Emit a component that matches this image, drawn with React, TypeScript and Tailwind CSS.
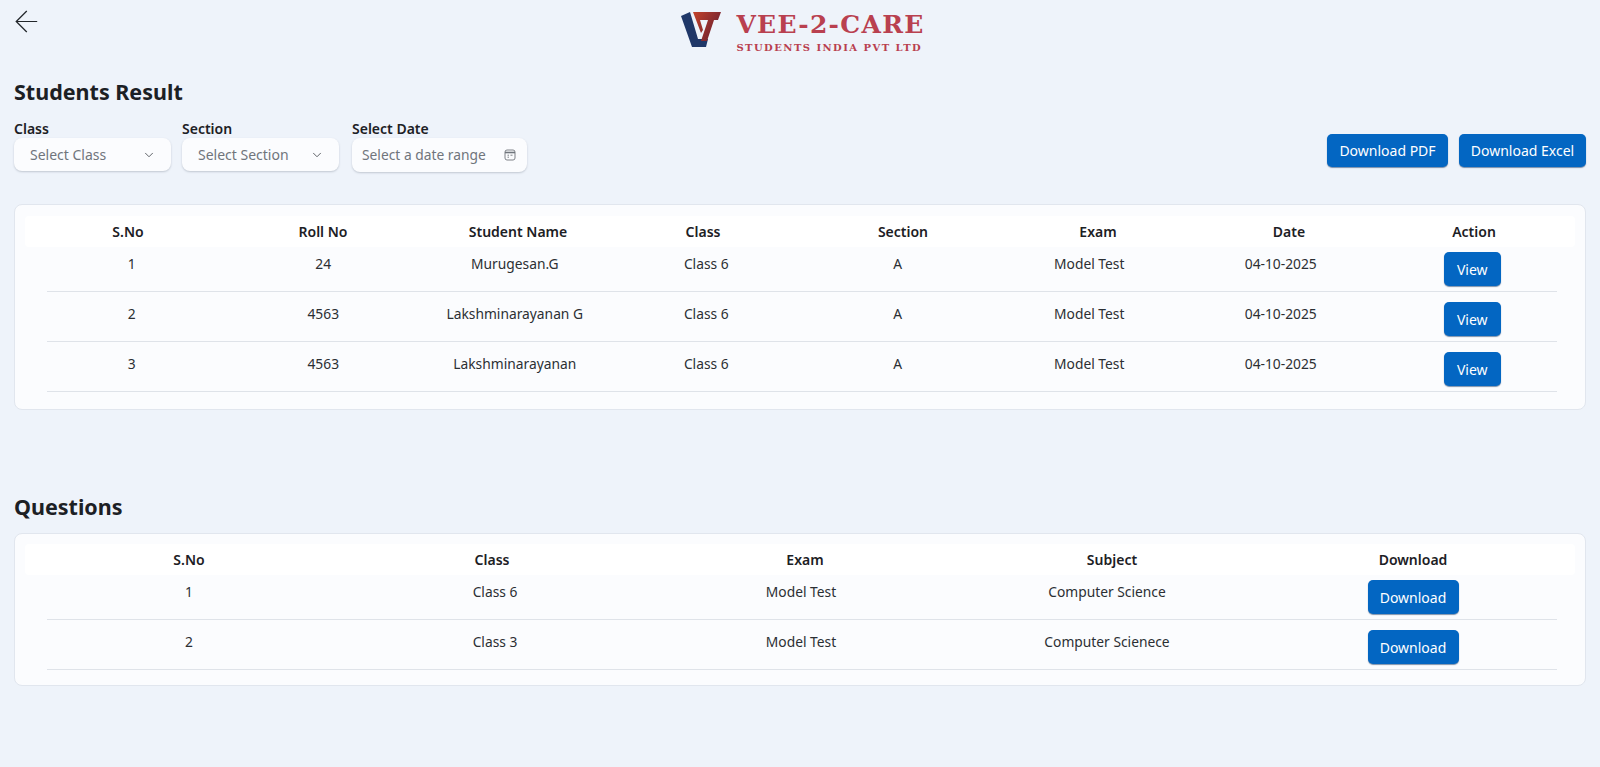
import { ArrowLeft, ChevronDown } from "lucide-react";

const students = [
  { sno: 1, roll: "24", name: "Murugesan.G", cls: "Class 6", section: "A", exam: "Model Test", date: "04-10-2025" },
  { sno: 2, roll: "4563", name: "Lakshminarayanan G", cls: "Class 6", section: "A", exam: "Model Test", date: "04-10-2025" },
  { sno: 3, roll: "4563", name: "Lakshminarayanan", cls: "Class 6", section: "A", exam: "Model Test", date: "04-10-2025" },
];

const questions = [
  { sno: 1, cls: "Class 6", exam: "Model Test", subject: "Computer Science" },
  { sno: 2, cls: "Class 3", exam: "Model Test", subject: "Computer Scienece" },
];

function Logo() {
  return (
    <div className="ml-[5px] flex items-start gap-[14px]">
      <svg width="42" height="38" viewBox="0 0 42 38" className="mt-[1px]">
        <defs>
          <linearGradient id="seven" x1="0" y1="0" x2="1" y2="0.6">
            <stop offset="0" stopColor="#c4432b" />
            <stop offset="1" stopColor="#6d2030" />
          </linearGradient>
        </defs>
        <path d="M1 5 L10 1 L18 28 L28 28 L26 36 L12 36 Z" fill="#1f3768" />
        <path d="M13 1 L41 1 L38 9 L34 9 L27 30 L21 30 L28 9 L20 9 L23 19 L21 22 Z" fill="url(#seven)" />
      </svg>
      <div className="flex flex-col items-start font-['DejaVu_Serif',serif] font-bold text-[#b9404f]">
        <div className="text-[25px] leading-[30px] tracking-[1.3px]">VEE-2-CARE</div>
        <div className="mt-[1px] text-[10px] leading-[13px] tracking-[1.45px]">STUDENTS INDIA PVT LTD</div>
      </div>
    </div>
  );
}

function Picker({ label, placeholder, width }: { label: string; placeholder: string; width: string }) {
  return (
    <div>
      <div className="text-[14px] leading-[19px] font-semibold text-[#1c2024]">{label}</div>
      <div className={`${width} flex h-[33px] items-center justify-between rounded-lg bg-[#fbfcfe] pl-4 pr-[15px] text-[14px] text-[#70757c] shadow-[0_1px_2px_rgba(60,70,90,0.25)]`}>
        <span>{placeholder}</span>
        <ChevronDown size={14} strokeWidth={1.5} className="text-[#4a4f55]" />
      </div>
    </div>
  );
}

function BlueButton({ children, className }: { children: string; className: string }) {
  return (
    <button className={`${className} rounded-[5px] bg-[#0366c2] text-[14px] text-white shadow-[0_1px_1px_rgba(0,40,90,0.5)]`}>
      {children}
    </button>
  );
}

export default function App() {
  return (
    <div className="min-h-[767px] bg-[#eef3fa] font-['Noto_Sans',sans-serif] text-[#2b2f33]">
      <div className="relative flex h-[67px] items-start justify-center pt-[10px]">
        <ArrowLeft className="absolute left-[9px] top-[4px] text-[#22262a]" size={35} strokeWidth={0.85} />
        <Logo />
      </div>

      <div className="pl-[14px] pr-[14px]">
        <h1 className="mt-[10px] text-[21.5px] leading-[30px] font-bold text-[#1c2024]">Students Result</h1>

        <div className="mt-[12px] flex items-start justify-between">
          <div className="flex gap-[11px]">
            <Picker label="Class" placeholder="Select Class" width="w-[157px]" />
            <Picker label="Section" placeholder="Select Section" width="w-[157px]" />
            <div className="ml-[2px]">
              <div className="text-[14px] leading-[19px] font-semibold text-[#1c2024]">Select Date</div>
              <div className="flex h-[34px] w-[175px] items-center justify-between rounded-lg bg-[#fbfcfe] pl-[10px] pr-[11px] text-[13.8px] text-[#70757c] shadow-[0_1px_2px_rgba(60,70,90,0.25)]">
                <span>Select a date range</span>
                <svg width="12" height="12" viewBox="0 0 12 12" fill="none" stroke="currentColor" strokeWidth="0.9">
                  <rect x="1" y="1" width="10" height="10" rx="2" />
                  <path d="M1 3.5H11" strokeWidth="1.6" />
                  <path d="M3.5 6.2H5M6.5 6.2H8.5M3.5 8.2H5" />
                </svg>
              </div>
            </div>
          </div>
          <div className="mt-[15px] flex gap-[11px]">
            <BlueButton className="h-[33px] w-[121px]">Download PDF</BlueButton>
            <BlueButton className="h-[33px] w-[127px]">Download Excel</BlueButton>
          </div>
        </div>

        <div className="mt-[32px] rounded-lg border border-[#e1e6ee] bg-[#fbfcfe] pl-[32px] pr-[28px] pt-[11px] pb-[17px]">
          <div className="-ml-[22px] -mr-[18px] grid h-[31px] grid-cols-[162px_228px_162px_208px_192px_198px_184px_186px] items-center rounded bg-white pl-[22px] text-center text-[14px] font-semibold text-[#1c2024]">
            <div>S.No</div>
            <div>Roll No</div>
            <div>Student Name</div>
            <div>Class</div>
            <div>Section</div>
            <div>Exam</div>
            <div>Date</div>
            <div>Action</div>
          </div>
          {students.map((s, i) => (
            <div key={s.sno} className={`${i === 0 ? "h-[45px]" : "h-[50px]"} border-b border-[#dfe3e9]`}>
              <div className="-ml-[11px] -mr-[11px] grid h-full grid-cols-8 items-end text-center text-[13.8px]">
                <div className="pb-[16px]">{s.sno}</div>
                <div className="pb-[16px]">{s.roll}</div>
                <div className="pb-[16px]">{s.name}</div>
                <div className="pb-[16px]">{s.cls}</div>
                <div className="pb-[16px]">{s.section}</div>
                <div className="pb-[16px]">{s.exam}</div>
                <div className="pb-[16px]">{s.date}</div>
                <div className="flex justify-center pb-[5px]">
                  <BlueButton className="h-[34px] w-[57px]">View</BlueButton>
                </div>
              </div>
            </div>
          ))}
        </div>

        <h2 className="mt-[82px] text-[21.5px] leading-[30px] font-bold text-[#1c2024]">Questions</h2>

        <div className="mt-[11px] rounded-lg border border-[#e1e6ee] bg-[#fbfcfe] pl-[32px] pr-[28px] pt-[10px] pb-[15px]">
          <div className="-ml-[22px] -mr-[18px] grid h-[31px] grid-cols-[284px_322px_304px_310px_292px] items-center rounded bg-white pl-[22px] text-center text-[14px] font-semibold text-[#1c2024]">
            <div>S.No</div>
            <div>Class</div>
            <div>Exam</div>
            <div>Subject</div>
            <div>Download</div>
          </div>
          {questions.map((q, i) => (
            <div key={q.sno} className={`${i === 0 ? "h-[45px]" : "h-[50px]"} border-b border-[#dfe3e9]`}>
              <div className="-ml-[11px] -mr-[9px] grid h-full grid-cols-5 items-end text-center text-[13.8px]">
                <div className="pb-[16px]">{q.sno}</div>
                <div className="pb-[16px]">{q.cls}</div>
                <div className="pb-[16px]">{q.exam}</div>
                <div className="pb-[16px]">{q.subject}</div>
                <div className="flex justify-center pb-[5px]">
                  <BlueButton className="h-[34px] w-[91px]">Download</BlueButton>
                </div>
              </div>
            </div>
          ))}
        </div>
      </div>
    </div>
  );
}
